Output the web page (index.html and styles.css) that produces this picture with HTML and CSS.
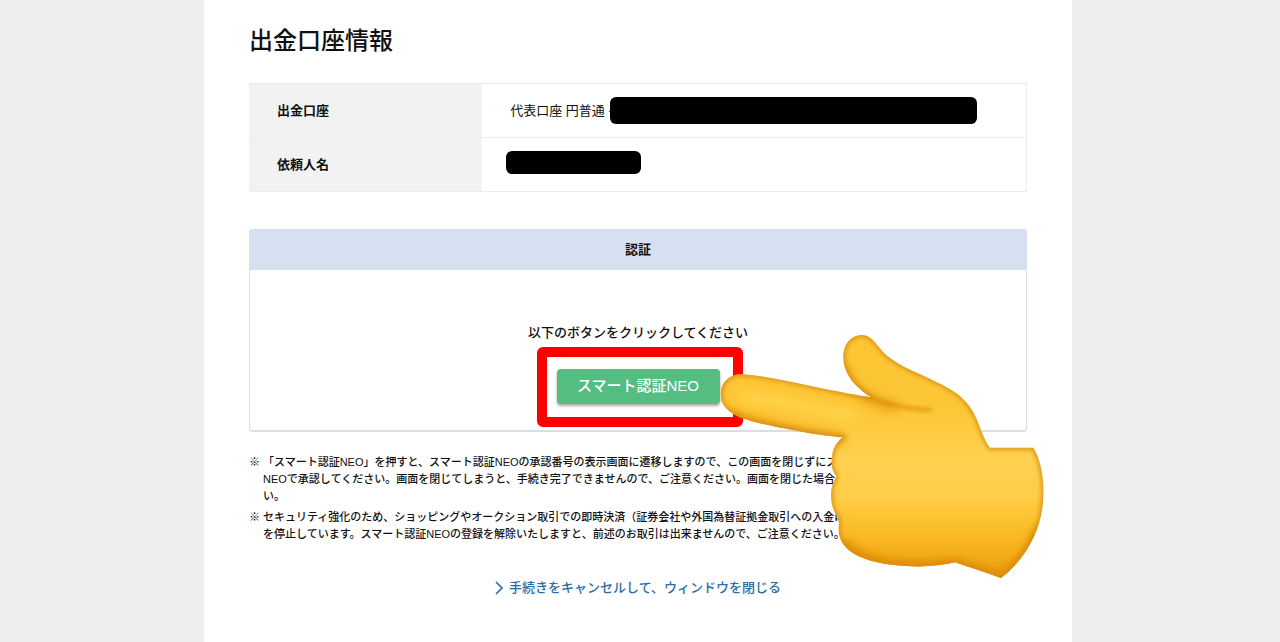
FILE: index.html
```
<!DOCTYPE html>
<html lang="ja">
<head>
    <meta charset="UTF-8">
    <meta name="viewport" content="width=device-width, initial-scale=1">
    <title>出金口座情報</title>
    <link rel="stylesheet" href="styles.css">
</head>
<body>

    <main class="page">
        <h1>出金口座情報</h1>

        <!-- 口座情報 -->
        <table class="account">
            <tr>
                <th scope="row">出金口座</th>
                <td><div class="value">代表口座 円普通 -<span class="mask mask-long"></span></div></td>
            </tr>
            <tr>
                <th scope="row">依頼人名</th>
                <td><div class="value value-name"><span class="mask mask-short"></span></div></td>
            </tr>
        </table>

        <!-- 認証 -->
        <section class="auth">
            <h2>認証</h2>
            <div class="auth-body">
                <p>以下のボタンをクリックしてください</p>
                <div class="btn-wrap">
                    <button type="button" class="btn-auth">スマート認証NEO</button>
                    <span class="frame"></span>
                </div>
            </div>

            <!-- 指差しアイコン -->
            <svg class="hand" viewBox="54 39 987 741" aria-hidden="true">
                <defs>
                    <linearGradient id="skin" x1="0" y1="0" x2="0" y2="1">
                        <stop offset="0" stop-color="#fdc532"/>
                        <stop offset="0.3" stop-color="#fdc636"/>
                        <stop offset="0.52" stop-color="#ffd150"/>
                        <stop offset="0.66" stop-color="#ffce48"/>
                        <stop offset="0.8" stop-color="#fbbd28"/>
                        <stop offset="0.92" stop-color="#f2ab18"/>
                        <stop offset="1" stop-color="#e69a10"/>
                    </linearGradient>
                    <path id="shape" d="M62 222C62 185 92 160 130 163C200 168 290 189 360 204C420 215 470 227 515 232C468 205 430 162 430 112C430 70 455 44 487 45C522 48 530 82 567 112C620 152 690 172 745 205C790 229 815 262 832 302C845 335 854 362 870 383L1000 383C1020 415 1033 470 1030 530C1027 620 985 710 903 774C858 757 812 744 765 727C720 737 670 742 620 738C560 735 500 725 460 700C425 677 412 650 417 612C418 600 413 590 408 582C395 565 390 530 395 505C397 490 405 480 409 467C395 455 392 430 397 402C401 377 415 365 428 352C350 346 250 325 190 312C150 304 110 290 90 275C70 260 62 245 62 222Z"/>
                    <clipPath id="inside"><use href="#shape"/></clipPath>
                    <filter id="soft" filterUnits="userSpaceOnUse" x="0" y="0" width="1080" height="810"><feGaussianBlur stdDeviation="7"/></filter>
                    <filter id="softer" filterUnits="userSpaceOnUse" x="0" y="0" width="1080" height="810"><feGaussianBlur stdDeviation="15"/></filter>
                </defs>
                <use href="#shape" fill="url(#skin)"/>
                <g clip-path="url(#inside)" fill="none">
                    <path d="M120 228C230 240 350 265 470 290" stroke="#ffd248" stroke-width="34" filter="url(#softer)"/>
                    <path d="M85 282C150 310 300 340 430 358" stroke="#e3960c" stroke-width="30" filter="url(#softer)"/>
                    <path d="M425 130C440 200 500 245 590 262" stroke="#e9a21a" stroke-width="32" filter="url(#softer)"/>
                    <path d="M425 670C480 738 620 755 765 735L905 782C960 740 1005 690 1025 620" stroke="#e08a05" stroke-width="38" filter="url(#softer)"/>
                    <use href="#shape" stroke="#d98f12" stroke-width="12" filter="url(#soft)"/>
                    <path d="M505 231C560 252 610 266 690 270" stroke="#d98b0c" stroke-width="9" stroke-linecap="round" filter="url(#soft)"/>
                </g>
            </svg>
        </section>

        <!-- 注意事項 -->
        <ul class="notes">
            <li>「スマート認証NEO」を押すと、スマート認証NEOの承認番号の表示画面に遷移しますので、この画面を閉じずにス<br>NEOで承認してください。画面を閉じてしまうと、手続き完了できませんので、ご注意ください。画面を閉じた場合、<br>い。</li>
            <li>セキュリティ強化のため、ショッピングやオークション取引での即時決済（証券会社や外国為替証拠金取引への入金は<br>を停止しています。スマート認証NEOの登録を解除いたしますと、前述のお取引は出来ませんので、ご注意ください。</li>
        </ul>

        <p class="cancel">
            <a href="#">
                <svg class="arrow" viewBox="0 0 8 14" aria-hidden="true"><path d="M1 1l6 6-6 6" fill="none" stroke="currentColor" stroke-width="1.6"/></svg>
                手続きをキャンセルして、ウィンドウを閉じる
            </a>
        </p>
    </main>

</body>
</html>
```
FILE: styles.css
```
* {
    box-sizing: border-box;
}
body {
    margin: 0;
    padding-right: 4px;
    background-color: #eeeeee;
    color: #111;
    font-family: "Liberation Sans", "Noto Sans CJK JP", sans-serif;
    font-size: 13px;
    line-height: 20px;
}
.page {
    max-width: 868px;
    min-height: 100vh;
    margin: 0 auto;
    padding: 25px 45px 32px;
    background-color: #fff;
}
h1 {
    margin: 0 0 26px;
    font-size: 24px;
    line-height: 32px;
    font-weight: 500;
}

/* 口座情報 */
.account {
    width: 100%;
    border-collapse: collapse;
    border: 1px solid #ececec;
    border-left: none;
}
.account th,
.account td {
    height: 54px;
    padding: 0 28px;
    border-bottom: 1px solid #ececec;
    text-align: left;
}
.account th {
    width: 30%;
    background-color: #f2f2f2;
    font-weight: bold;
}
.value {
    display: flex;
    align-items: center;
}
.value-name {
    margin-left: -4px;
    padding-bottom: 4px;
}
.mask {
    background-color: #000;
    border-radius: 6px;
}
.mask-long {
    flex: 0 1 367px;
    height: 27px;
    margin-left: -3px;
}
.mask-short {
    width: 135px;
    height: 23px;
}

/* 認証 */
.auth {
    position: relative;
    margin-top: 37px;
    border: 1px solid #d9dde4;
    border-bottom-width: 2px;
    border-radius: 4px;
}
.auth h2 {
    margin: -1px -1px 0;
    padding: 11px 0 10px;
    background-color: #d7e0f1;
    border-radius: 4px 4px 0 0;
    font-size: 13px;
    line-height: 20px;
    text-align: center;
}
.auth-body {
    padding: 53px 0 26px;
    text-align: center;
}
.auth-body p {
    margin: 0 0 26px;
    font-weight: 500;
}
.btn-wrap {
    position: relative;
    display: inline-block;
    vertical-align: top;
}
.btn-auth {
    display: block;
    width: 163px;
    height: 35px;
    padding: 0 0 4px;
    border: none;
    border-radius: 4px;
    background-color: #55bd82;
    box-shadow: 0 2px 3px rgba(0, 0, 0, 0.35);
    color: #fff;
    font-family: inherit;
    font-size: 15px;
    font-weight: 500;
    cursor: pointer;
}
.frame {
    position: absolute;
    top: -22px;
    right: -23px;
    bottom: -23px;
    left: -20px;
    border: 10px solid #fe0000;
    border-radius: 6px;
    pointer-events: none;
}
.hand {
    position: absolute;
    top: 103px;
    left: 468px;
    width: 329px;
    height: 247px;
    pointer-events: none;
}

/* 注意事項 */
.notes {
    margin: 22px 0 0;
    padding: 0;
    list-style: none;
    font-size: 11px;
    line-height: 17px;
    font-weight: 500;
    white-space: nowrap;
}
.notes li {
    padding-left: 14px;
    margin-bottom: 4px;
}
.notes li::before {
    content: "※";
    float: left;
    margin-left: -14px;
}

.cancel {
    margin: 35px 0 0;
    text-align: center;
    font-weight: 500;
}
.cancel a {
    display: inline-flex;
    align-items: center;
    gap: 6px;
    color: #2a6ca8;
    text-decoration: none;
}
.arrow {
    width: 8px;
    height: 14px;
}
```
